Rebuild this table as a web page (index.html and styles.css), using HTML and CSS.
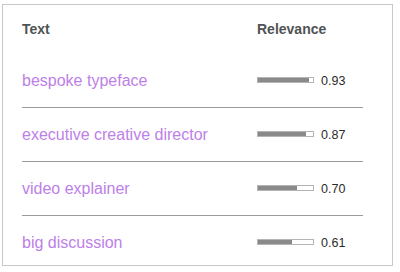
FILE: index.html
```html
<!DOCTYPE html>
<html lang="en">
<head>
    <meta charset="UTF-8">
    <title>Keywords</title>
    <link rel="stylesheet" href="styles.css">
</head>
<body>

<div class="panel">
    <!-- cabeçalho -->
    <div class="row head">
        <div class="cell">Text</div>
        <div class="cell">Relevance</div>
    </div>

    <div class="row">
        <div class="cell term">bespoke typeface</div>
        <div class="cell score">
            <div class="bar"><div class="fill" style="width: 93%;"></div></div>
            <span>0.93</span>
        </div>
    </div>
    <div class="row">
        <div class="cell term">executive creative director</div>
        <div class="cell score">
            <div class="bar"><div class="fill" style="width: 87%;"></div></div>
            <span>0.87</span>
        </div>
    </div>
    <div class="row">
        <div class="cell term">video explainer</div>
        <div class="cell score">
            <div class="bar"><div class="fill" style="width: 70%;"></div></div>
            <span>0.70</span>
        </div>
    </div>
    <div class="row last">
        <div class="cell term">big discussion</div>
        <div class="cell score">
            <div class="bar"><div class="fill" style="width: 61%;"></div></div>
            <span>0.61</span>
        </div>
    </div>
</div>

</body>
</html>
```

FILE: styles.css
```css
body {
    margin: 0;
    padding: 4px 0 0 2px;
    font-family: "Liberation Sans", Arial, sans-serif;
    background-color: #ffffff;
}

.panel {
    width: 391px;
    height: 262px;
    box-sizing: border-box;
    border: 1px solid #c8c8c8;
    padding: 0 29px 0 19px;
    overflow: hidden;
}

.row {
    display: grid;
    grid-template-columns: 235px 1fr;
    align-items: center;
    height: 54px;
    box-sizing: border-box;
    border-bottom: 1px solid #9a9a9a;
}

.row.head {
    height: 49px;
    align-items: start;
    padding-top: 14px;
    border-bottom: none;
    font-size: 14px;
    font-weight: bold;
    line-height: 20px;
    color: #4f5354;
}

.row.last {
    height: 48px;
    padding-top: 6px;
    border-bottom: none;
}

.term {
    font-size: 16px;
    line-height: 20px;
    color: #bd80e8;
    white-space: nowrap;
}

.score {
    display: flex;
    align-items: center;
    gap: 7px;
    font-size: 12.5px;
    color: #2b2b2b;
}

.bar {
    width: 57px;
    height: 6px;
    box-sizing: border-box;
    border: 1px solid #b4b4b4;
    background-color: #ffffff;
    margin-top: -2px;
}

.fill {
    height: 100%;
    background-color: #8a8a8a;
}
```
